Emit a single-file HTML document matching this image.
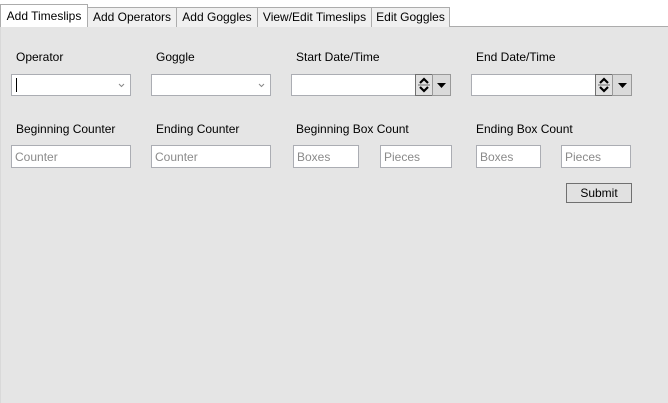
<!DOCTYPE html>
<html><head><style>
*{box-sizing:border-box;margin:0;padding:0}
body{width:668px;height:403px;background:#fff;font-family:"Liberation Sans",sans-serif;font-size:12px;color:#000;position:relative;overflow:hidden}
.a{position:absolute}
.tab{position:absolute;top:7px;height:20px;background:#f0f0f0;border:1px solid #acacac;border-bottom:none;line-height:18px;text-align:center;font-size:12px}
.panel{position:absolute;left:0;top:26px;width:668px;height:377px;background:#e5e5e5;border-top:1px solid #acacac;border-left:1px solid #d9d9d9}
.lbl{position:absolute;font-size:12px;line-height:14px}
.box{position:absolute;background:#fff;border:1px solid #abadb3}
.ph{position:absolute;top:1px;font-size:12px;color:#8a8a8a;line-height:21px;padding-left:3px}
.sp{position:absolute;background:#e1e1e1;border:1px solid #707070}
</style></head><body>
<div class="panel"></div>
<div class="tab" style="left:87px;width:90px">Add Operators</div>
<div class="tab" style="left:176px;width:82px">Add Goggles</div>
<div class="tab" style="left:257px;width:115px">View/Edit Timeslips</div>
<div class="tab" style="left:371px;width:79px">Edit Goggles</div>
<div class="tab" style="left:0;top:4px;width:88px;height:23px;background:#fff;line-height:22px;z-index:2">Add Timeslips</div>

<div class="lbl" style="left:16px;top:50px">Operator</div>
<div class="lbl" style="left:156px;top:50px">Goggle</div>
<div class="lbl" style="left:296px;top:50px">Start Date/Time</div>
<div class="lbl" style="left:476px;top:50px">End Date/Time</div>

<div class="box" style="left:11px;top:74px;width:120px;height:22px"><div class="a" style="left:4px;top:3px;width:1px;height:14px;background:#000"></div><svg class="a" style="left:106px;top:8px" width="7" height="5"><path d="M1 1l2.5 2.5L6 1" stroke="#888" fill="none"/></svg></div>
<div class="box" style="left:151px;top:74px;width:120px;height:22px"><svg class="a" style="left:106px;top:8px" width="7" height="5"><path d="M1 1l2.5 2.5L6 1" stroke="#888" fill="none"/></svg></div>

<div class="box" style="left:291px;top:74px;width:125px;height:22px"></div>
<div class="sp" style="left:415px;top:74px;width:18px;height:22px">
<svg class="a" style="left:2px;top:1px" width="12" height="18"><path d="M2 7l4-4 4 4" stroke="#000" stroke-width="2.2" fill="none"/><path d="M0 9h12" stroke="#707070"/><path d="M2 11l4 4 4-4" stroke="#000" stroke-width="2.2" fill="none"/></svg></div>
<div class="sp" style="left:432px;top:74px;width:19px;height:22px;background:#dadada;border-color:#999"><svg class="a" style="left:4px;top:8px" width="10" height="6"><path d="M0 0h9L4.5 5z" fill="#000"/></svg></div>

<div class="box" style="left:471px;top:74px;width:125px;height:22px"></div>
<div class="sp" style="left:595px;top:74px;width:18px;height:22px">
<svg class="a" style="left:2px;top:1px" width="12" height="18"><path d="M2 7l4-4 4 4" stroke="#000" stroke-width="2.2" fill="none"/><path d="M0 9h12" stroke="#707070"/><path d="M2 11l4 4 4-4" stroke="#000" stroke-width="2.2" fill="none"/></svg></div>
<div class="sp" style="left:612px;top:74px;width:20px;height:22px;background:#dadada;border-color:#999"><svg class="a" style="left:5px;top:8px" width="10" height="6"><path d="M0 0h9L4.5 5z" fill="#000"/></svg></div>

<div class="lbl" style="left:16px;top:122px">Beginning Counter</div>
<div class="lbl" style="left:156px;top:122px">Ending Counter</div>
<div class="lbl" style="left:296px;top:122px">Beginning Box Count</div>
<div class="lbl" style="left:476px;top:122px">Ending Box Count</div>

<div class="box" style="left:11px;top:145px;width:120px;height:23px"><div class="ph">Counter</div></div>
<div class="box" style="left:151px;top:145px;width:120px;height:23px"><div class="ph">Counter</div></div>
<div class="box" style="left:293px;top:145px;width:66px;height:23px"><div class="ph">Boxes</div></div>
<div class="box" style="left:380px;top:145px;width:72px;height:23px"><div class="ph">Pieces</div></div>
<div class="box" style="left:476px;top:145px;width:65px;height:23px"><div class="ph">Boxes</div></div>
<div class="box" style="left:561px;top:145px;width:70px;height:23px"><div class="ph">Pieces</div></div>

<div class="a" style="left:566px;top:183px;width:66px;height:20px;background:#e1e1e1;border:1px solid #707070;text-align:center;line-height:19px">Submit</div>
</body></html>
